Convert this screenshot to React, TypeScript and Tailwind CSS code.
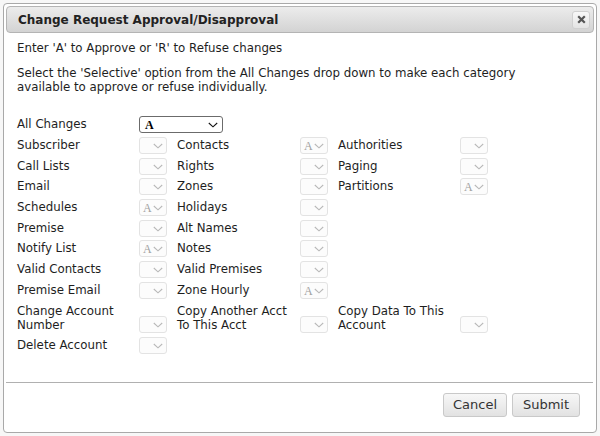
import React from "react";

const font = { fontFamily: '"DejaVu Sans", Verdana, sans-serif' };
const serifA = { fontFamily: '"Liberation Serif", "Times New Roman", serif' };

function Chevron({ color, className }: { color: string; className?: string }) {
  return (
    <svg width="10" height="6" viewBox="0 0 10 6" className={className}>
      <path d="M0.8 1 L5 4.8 L9.2 1" fill="none" stroke={color} strokeWidth="1.1" />
    </svg>
  );
}

function SmallSelect({ value }: { value: string }) {
  return (
    <div className="relative w-[28px] h-[17px] rounded-[3px] border border-[#e3e3e3] bg-[#fcfcfc]">
      {value ? (
        <span className="absolute left-[3px] top-[1px] text-[12px] leading-[14px] text-[#a0a0a0]" style={serifA}>
          A
        </span>
      ) : null}
      <Chevron color="#b8b8b8" className="absolute right-[3px] top-[5px]" />
    </div>
  );
}

type Cell = { label: React.ReactNode; value: string } | null;

const rows: Cell[][] = [
  [
    { label: "Subscriber", value: "" },
    { label: "Contacts", value: "A" },
    { label: "Authorities", value: "" },
  ],
  [
    { label: "Call Lists", value: "" },
    { label: "Rights", value: "" },
    { label: "Paging", value: "" },
  ],
  [
    { label: "Email", value: "" },
    { label: "Zones", value: "" },
    { label: "Partitions", value: "A" },
  ],
  [{ label: "Schedules", value: "A" }, { label: "Holidays", value: "" }, null],
  [{ label: "Premise", value: "" }, { label: "Alt Names", value: "" }, null],
  [{ label: "Notify List", value: "A" }, { label: "Notes", value: "" }, null],
  [{ label: "Valid Contacts", value: "" }, { label: "Valid Premises", value: "" }, null],
  [{ label: "Premise Email", value: "" }, { label: "Zone Hourly", value: "A" }, null],
  [
    { label: <>Change Account<br />Number</>, value: "" },
    { label: <>Copy Another Acct<br />To This Acct</>, value: "" },
    { label: <>Copy Data To This<br />Account</>, value: "" },
  ],
  [{ label: "Delete Account", value: "" }, null, null],
];

export default function App() {
  return (
    <div className="w-[600px] h-[436px] bg-[#f7f7f7] pt-[3px] pl-[3px] text-[#1e1e1e]" style={font}>
      <div className="w-[594px] h-[430px] bg-white border border-[#a9a9a9] rounded-[4px] p-[2px] flex flex-col">
        {/* Title bar */}
        <div className="h-[27px] shrink-0 rounded-[4px] border border-[#b4b4b4] bg-gradient-to-b from-[#ececec] to-[#d3d3d3] flex items-center justify-between pl-[11px] pr-[3px]">
          <span className="text-[12px] font-bold leading-[16px] text-[#222]">
            Change Request Approval/Disapproval
          </span>
          <div className="w-[18px] h-[18px] rounded-[3px] border border-[#d0d0d0] bg-gradient-to-b from-[#f8f8f8] to-[#e4e4e4] flex items-center justify-center">
            <svg width="9" height="9" viewBox="0 0 9 9">
              <path d="M1.2 1.2 L7.8 7.8 M7.8 1.2 L1.2 7.8" stroke="#555" strokeWidth="2.2" />
            </svg>
          </div>
        </div>

        {/* Body */}
        <div className="flex-1 pl-[11px] pt-[8px] text-[11.8px] leading-[14px]">
          <p>Enter 'A' to Approve or 'R' to Refuse changes</p>
          <p className="mt-[11px]">
            Select the 'Selective' option from the All Changes drop down to make each category
            <br />
            available to approve or refuse individually.
          </p>

          <div className="mt-[20px] grid grid-cols-[122px_28px_10px_123px_28px_10px_122px_28px] auto-rows-[minmax(20.7px,auto)]">
            {/* All Changes row */}
            <div className="self-center">All Changes</div>
            <div className="col-span-7 self-center pt-[0.5px]">
              <div className="relative w-[84px] h-[17px] rounded-[3px] border border-[#6b6b6b] bg-white">
                <span className="absolute left-[5px] top-[1px] text-[12px] leading-[14px] font-bold text-black" style={serifA}>
                  A
                </span>
                <Chevron color="#111" className="absolute right-[4px] top-[5px]" />
              </div>
            </div>

            {rows.map((row, ri) => (
              <React.Fragment key={ri}>
                {row.map((cell, ci) => (
                  <React.Fragment key={ci}>
                    <div className="self-center py-[3.35px]">{cell ? cell.label : ""}</div>
                    <div className="self-end pb-[1.5px]">{cell ? <SmallSelect value={cell.value} /> : null}</div>
                    {ci < 2 ? <div /> : null}
                  </React.Fragment>
                ))}
              </React.Fragment>
            ))}
          </div>
        </div>

        {/* Separator */}
        <div className="h-px bg-[#b0b0b0] mr-[1px]" />

        {/* Footer */}
        <div className="h-[47px] shrink-0 flex justify-end items-start pt-[10px] pr-[14px] gap-[5px]">
          <button className="w-[64px] h-[24px] rounded-[3px] border border-[#c9c9c9] bg-gradient-to-b from-[#f7f7f7] to-[#e2e2e2] text-[13px] text-[#333]" style={font}>
            Cancel
          </button>
          <button className="w-[68px] h-[24px] rounded-[3px] border border-[#c9c9c9] bg-gradient-to-b from-[#f7f7f7] to-[#e2e2e2] text-[13px] text-[#333]" style={font}>
            Submit
          </button>
        </div>
      </div>
    </div>
  );
}
